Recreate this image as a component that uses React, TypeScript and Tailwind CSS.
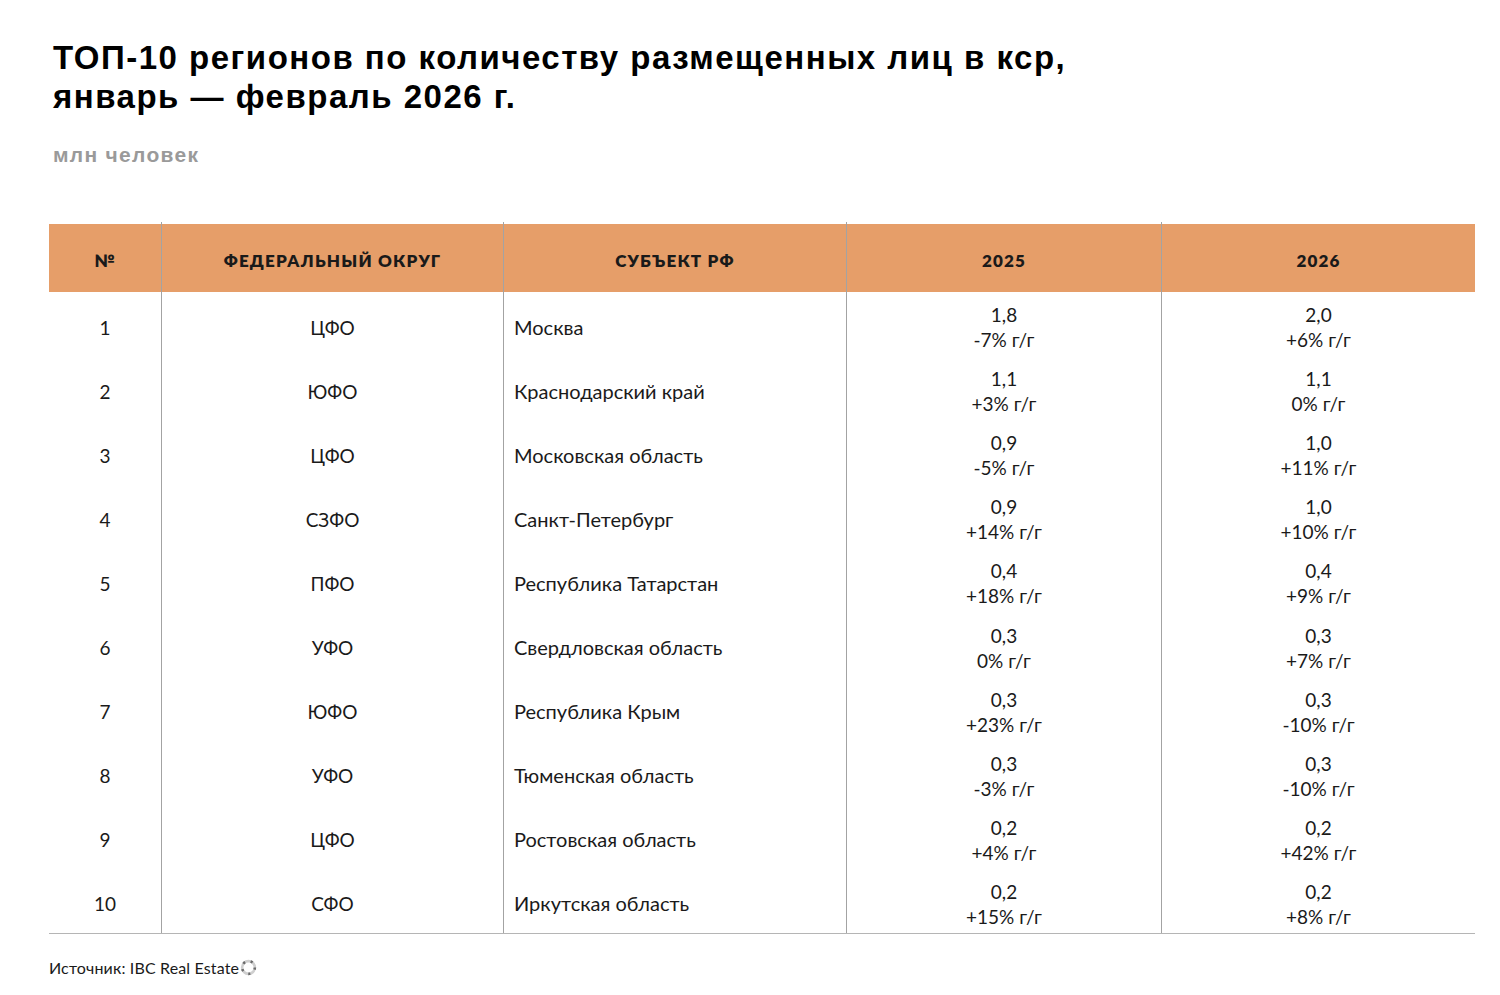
const rows = [
  { n: "1", fo: "ЦФО", region: "Москва", y25: "1,8", d25: "-7% г/г", y26: "2,0", d26: "+6% г/г" },
  { n: "2", fo: "ЮФО", region: "Краснодарский край", y25: "1,1", d25: "+3% г/г", y26: "1,1", d26: "0% г/г" },
  { n: "3", fo: "ЦФО", region: "Московская область", y25: "0,9", d25: "-5% г/г", y26: "1,0", d26: "+11% г/г" },
  { n: "4", fo: "СЗФО", region: "Санкт-Петербург", y25: "0,9", d25: "+14% г/г", y26: "1,0", d26: "+10% г/г" },
  { n: "5", fo: "ПФО", region: "Республика Татарстан", y25: "0,4", d25: "+18% г/г", y26: "0,4", d26: "+9% г/г" },
  { n: "6", fo: "УФО", region: "Свердловская область", y25: "0,3", d25: "0% г/г", y26: "0,3", d26: "+7% г/г" },
  { n: "7", fo: "ЮФО", region: "Республика Крым", y25: "0,3", d25: "+23% г/г", y26: "0,3", d26: "-10% г/г" },
  { n: "8", fo: "УФО", region: "Тюменская область", y25: "0,3", d25: "-3% г/г", y26: "0,3", d26: "-10% г/г" },
  { n: "9", fo: "ЦФО", region: "Ростовская область", y25: "0,2", d25: "+4% г/г", y26: "0,2", d26: "+42% г/г" },
  { n: "10", fo: "СФО", region: "Иркутская область", y25: "0,2", d25: "+15% г/г", y26: "0,2", d26: "+8% г/г" },
];

const cols = "grid grid-cols-[112px_342px_343px_315px_314px]";
const line = "border-l border-[#a3a3a3]";

function SourceIcon() {
  return (
    <svg width="17" height="17" viewBox="0 0 16 16" className="ml-[1px] inline-block">
      <circle cx="8" cy="8" r="6" fill="none" stroke="#cfcfcf" strokeWidth="2.4" />
      <circle cx="8" cy="8" r="6" fill="none" stroke="#6b6b6b" strokeWidth="2.4" strokeDasharray="2 5.4" />
    </svg>
  );
}

export default function App() {
  return (
    <div className="h-[995px] w-[1500px] bg-white text-[#1a1a1a]">
      <div className="px-[53px] pt-[38px]">
        <h1 className="font-['Liberation_Sans',Arial,sans-serif] text-[33px] font-bold leading-[39px] tracking-[1.5px] text-black">
          ТОП-10 регионов по количеству размещенных лиц в кср,
          <br />
          январь — февраль 2026 г.
        </h1>
        <p className="mt-[27px] font-['Liberation_Sans',Arial,sans-serif] text-[21px] font-bold leading-[24px] tracking-[1.3px] text-[#9a9a9a]">
          млн человек
        </p>
      </div>

      <div className="ml-[49px] mt-[55px] w-[1426px] font-['Lato','Noto_Sans',sans-serif]">
        <div className={`${cols} h-[2px]`}>
          <div />
          <div className={line} />
          <div className={line} />
          <div className={line} />
          <div className={line} />
        </div>
        <div className={`${cols} h-[68px] bg-[#e69e69] pt-[5px] text-[17px] font-extrabold uppercase tracking-[1.2px] text-[#1a1a1a]`}>
          <div className="flex items-center justify-center">№</div>
          <div className={`${line} -mt-[5px] flex items-center justify-center pt-[5px]`}>Федеральный округ</div>
          <div className={`${line} -mt-[5px] flex items-center justify-center pt-[5px]`}>Субъект РФ</div>
          <div className={`${line} -mt-[5px] flex items-center justify-center pt-[5px]`}>2025</div>
          <div className={`${line} -mt-[5px] flex items-center justify-center pt-[5px]`}>2026</div>
        </div>
        <div className="border-b border-[#b5b5b5]">
          {rows.map((r) => (
            <div key={r.n} className={`${cols} h-[64.1px] text-[19px] leading-[25px]`}>
              <div className="flex items-center justify-center pt-[6px]">{r.n}</div>
              <div className={`${line} flex items-center justify-center pt-[6px]`}>{r.fo}</div>
              <div className={`${line} flex items-center pl-[10px] pt-[6px] text-[20px]`}>{r.region}</div>
              <div className={`${line} flex flex-col items-center justify-center pt-[6px]`}>
                <span>{r.y25}</span>
                <span>{r.d25}</span>
              </div>
              <div className={`${line} flex flex-col items-center justify-center pt-[6px]`}>
                <span>{r.y26}</span>
                <span>{r.d26}</span>
              </div>
            </div>
          ))}
        </div>
        <p className="mt-[24px] flex items-center text-[16px] leading-[20px] tracking-[0.15px] text-[#1a1a1a]">
          Источник: IBC Real Estate
          <SourceIcon />
        </p>
      </div>
    </div>
  );
}
